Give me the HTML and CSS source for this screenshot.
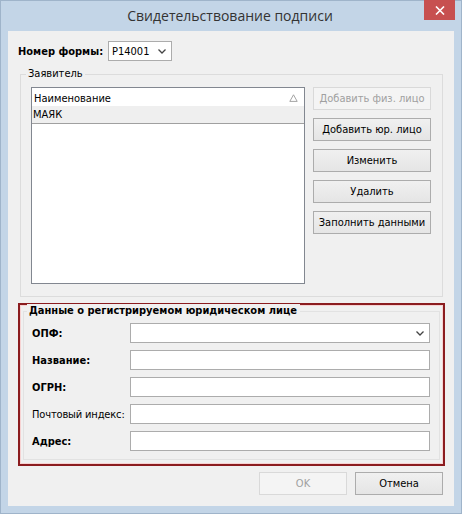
FILE: index.html
```
<!DOCTYPE html>
<html lang="ru">
<head>
<meta charset="utf-8">
<title>Свидетельствование подписи</title>
<link rel="stylesheet" href="styles.css">
</head>
<body>
<div class="window">
  <div class="titlebar">
    <div class="title">Свидетельствование подписи</div>
    <div class="close"><svg width="10" height="9" viewBox="0 0 10 9"><path d="M1 0.5 L9 8.5 M9 0.5 L1 8.5" stroke="#fff" stroke-width="1.6"/></svg></div>
  </div>
  <div class="client">
    <div class="formrow">
      <span class="lbl-b formlbl">Номер формы:</span>
      <div class="select small"><span>P14001</span><svg class="chev" width="8" height="5" viewBox="0 0 8 5"><path d="M0.5 0.5 L4 4 L7.5 0.5" fill="none" stroke="#444" stroke-width="1.3"/></svg></div>
    </div>
    <div class="group">
      <span class="group-title">Заявитель</span>
      <div class="group-body">
        <div class="list">
          <div class="list-head"><span>Наименование</span><svg width="9" height="8" viewBox="0 0 9 8"><path d="M4.5 0.8 L8.2 7.4 L0.8 7.4 Z" fill="none" stroke="#9a9a9a" stroke-width="0.9"/></svg></div>
          <div class="list-row">МАЯК</div>
        </div>
        <div class="buttons">
          <div class="btn disabled">Добавить физ. лицо</div>
          <div class="btn">Добавить юр. лицо</div>
          <div class="btn">Изменить</div>
          <div class="btn">Удалить</div>
          <div class="btn">Заполнить данными</div>
        </div>
      </div>
    </div>
    <div class="redpanel">
      <div class="inner">
        <span class="inner-title">Данные о регистрируемом юридическом лице</span>
        <div class="fields">
          <span class="lbl-b">ОПФ:</span>
          <div class="select wide"><span></span><svg class="chev" width="8" height="5" viewBox="0 0 8 5"><path d="M0.5 0.5 L4 4 L7.5 0.5" fill="none" stroke="#444" stroke-width="1.3"/></svg></div>
          <span class="lbl-b">Название:</span>
          <div class="input"></div>
          <span class="lbl-b">ОГРН:</span>
          <div class="input"></div>
          <span class="lbl narrow">Почтовый индекс:</span>
          <div class="input"></div>
          <span class="lbl-b">Адрес:</span>
          <div class="input"></div>
        </div>
      </div>
    </div>
    <div class="footer">
      <div class="btn disabled fbtn">OK</div>
      <div class="btn fbtn">Отмена</div>
    </div>
  </div>
</div>
</body>
</html>
```
FILE: styles.css
```
* { box-sizing: border-box; }
html, body { margin: 0; padding: 0; }
body {
  width: 462px;
  height: 514px;
  overflow: hidden;
  font-family: "DejaVu Sans Condensed", "DejaVu Sans", sans-serif;
  font-size: 11px;
  color: #000;
}
.window {
  width: 462px;
  height: 514px;
  background: #c3d5e7;
  border: 1px solid #9fb4ca;
  position: relative;
}
.titlebar {
  height: 30px;
  display: flex;
  align-items: center;
  justify-content: center;
}
.title {
  font-family: "Open Sans", "Noto Sans", sans-serif;
  font-size: 14px;
  color: #333;
  margin-top: -2px;
  margin-left: -2px;
}
.close {
  position: absolute;
  top: -1px;
  left: 423px;
  width: 31px;
  height: 20px;
  background: #c75050;
  display: flex;
  align-items: center;
  justify-content: center;
}
.client {
  margin-left: 7px;
  width: 446px;
  height: 475px;
  background: #f0f0f0;
  padding: 10px 0 0 10px;
}
.lbl-b { font-weight: bold; }
.narrow { letter-spacing: -0.15px; }
.formrow {
  display: flex;
  align-items: center;
  height: 20px;
}
.formlbl { width: 90px; }
.select {
  height: 20px;
  background: #fff;
  border: 1px solid #acacac;
  display: flex;
  align-items: center;
  justify-content: space-between;
  padding: 0 5px 0 3px;
}
.select.small { width: 64px; }
.chev { display: block; }
.group {
  position: relative;
  margin-top: 13px;
  margin-left: 2px;
  width: 423px;
  height: 223px;
  border: 1px solid #dcdcdc;
  padding: 12px 0 0 10px;
}
.group-title {
  position: absolute;
  top: -8px;
  left: 5px;
  padding: 0 2px;
  background: #f0f0f0;
  line-height: 14px;
}
.group-body {
  display: flex;
  gap: 8px;
}
.list {
  width: 274px;
  height: 197px;
  background: #fff;
  border: 1px solid #828790;
}
.list-head {
  height: 18px;
  display: flex;
  align-items: center;
  justify-content: space-between;
  padding: 2px 6px 0 2px;
}
.list-row {
  height: 18px;
  background: #efefef;
  border-bottom: 1px solid #a0a0a0;
  display: flex;
  align-items: center;
  padding-left: 1px;
}
.buttons {
  display: flex;
  flex-direction: column;
  gap: 8px;
}
.btn {
  width: 118px;
  height: 23px;
  border: 1px solid #acacac;
  background: linear-gradient(#f0f0f0, #e5e5e5);
  display: flex;
  align-items: center;
  justify-content: center;
}
.btn.disabled {
  border-color: #d9d9d9;
  background: #f4f4f4;
  color: #a0a0a0;
}
.redpanel {
  margin-top: 6px;
  width: 427px;
  height: 163px;
  border: 2px solid #8b1c1f;
  box-shadow: inset 0 0 0 1px #f6d2d2;
  padding: 6px 3px 0 3px;
}
.inner {
  position: relative;
  height: 149px;
  border: 1px solid #e2e2e2;
  padding: 11px 0 0 8px;
}
.inner-title {
  position: absolute;
  top: -8px;
  left: 3px;
  padding: 0 3px 0 2px;
  background: #f0f0f0;
  font-weight: bold;
  line-height: 14px;
}
.fields {
  display: grid;
  grid-template-columns: 98px 300px;
  grid-auto-rows: 20px;
  row-gap: 7px;
  align-items: center;
}
.select.wide { width: 300px; }
.input {
  height: 20px;
  background: #fff;
  border: 1px solid #acacac;
}
.footer {
  display: flex;
  justify-content: flex-end;
  gap: 8px;
  margin-top: 6px;
  padding-right: 11px;
}
.fbtn { width: 88px; }
```
